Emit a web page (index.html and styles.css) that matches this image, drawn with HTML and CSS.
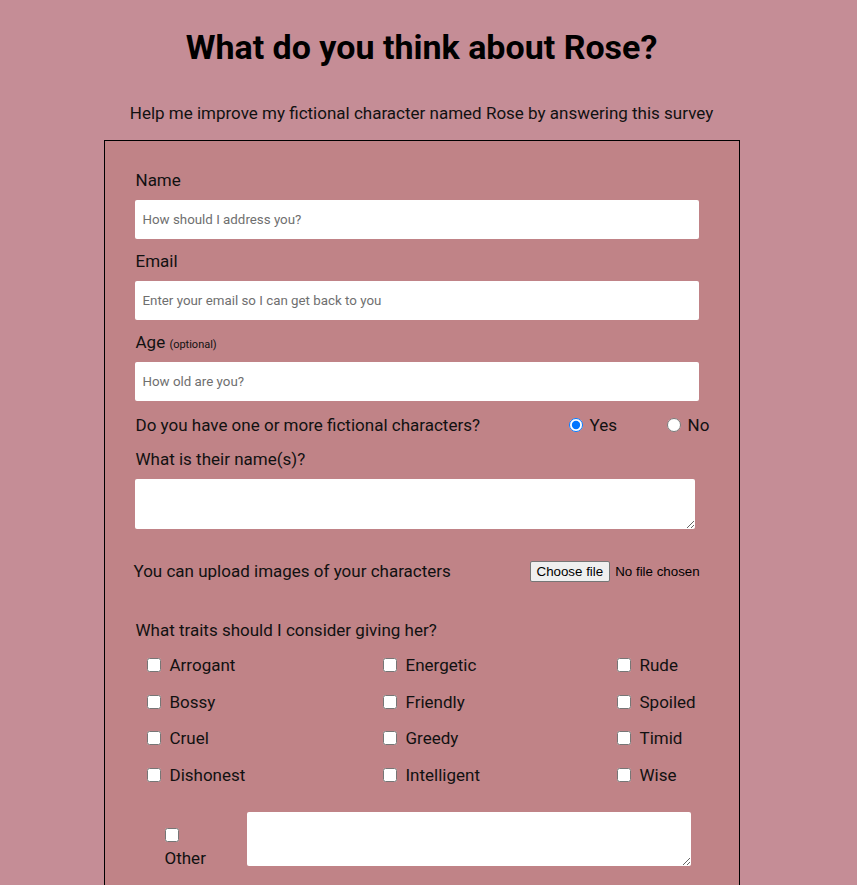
FILE: index.html
```html
<!DOCTYPE html>
<html lang="en">
<head>
<meta charset="utf-8">
<title>Survey</title>
<link rel="stylesheet" href="styles.css">
</head>
<body>
<div class="page">
  <h1 class="title">What do you think about Rose?</h1>
  <p class="intro">Help me improve my fictional character named Rose by answering this survey</p>
  <form class="survey">
    <div class="field">
      <label class="label" for="name">Name</label>
      <input class="text" id="name" type="text" placeholder="How should I address you?">
    </div>
    <div class="field">
      <label class="label" for="email">Email</label>
      <input class="text" id="email" type="email" placeholder="Enter your email so I can get back to you">
    </div>
    <div class="field">
      <label class="label" for="age">Age <span class="small">(optional)</span></label>
      <input class="text" id="age" type="number" placeholder="How old are you?">
    </div>
    <div class="radio-row">
      <span class="question">Do you have one or more fictional characters?</span>
      <label class="radio yes"><input type="radio" name="has" checked> Yes</label>
      <label class="radio no"><input type="radio" name="has"> No</label>
    </div>
    <div class="field names">
      <label class="label" for="names">What is their name(s)?</label>
      <textarea class="area" id="names"></textarea>
    </div>
    <div class="upload-row">
      <span class="upload-label">You can upload images of your characters</span>
      <label class="file-btn">Choose file<input class="file" type="file"></label>
      <span class="file-status">No file chosen</span>
    </div>
    <div class="traits-label">What traits should I consider giving her?</div>
    <div class="traits">
      <label class="trait"><input type="checkbox"> Arrogant</label>
      <label class="trait"><input type="checkbox"> Energetic</label>
      <label class="trait"><input type="checkbox"> Rude</label>
      <label class="trait"><input type="checkbox"> Bossy</label>
      <label class="trait"><input type="checkbox"> Friendly</label>
      <label class="trait"><input type="checkbox"> Spoiled</label>
      <label class="trait"><input type="checkbox"> Cruel</label>
      <label class="trait"><input type="checkbox"> Greedy</label>
      <label class="trait"><input type="checkbox"> Timid</label>
      <label class="trait"><input type="checkbox"> Dishonest</label>
      <label class="trait"><input type="checkbox"> Intelligent</label>
      <label class="trait"><input type="checkbox"> Wise</label>
    </div>
    <div class="other-row">
      <label class="other"><input type="checkbox"><span>Other</span></label>
      <textarea class="other-area"></textarea>
    </div>
  </form>
</div>
</body>
</html>
```

FILE: styles.css
```css
html, body {
  margin: 0;
  padding: 0;
}
body {
  background: #c58d96;
  font-family: Roboto, "Liberation Sans", sans-serif;
  color: #111;
}
.page {
  width: 843px;
  display: flex;
  flex-direction: column;
  align-items: center;
}
.title {
  margin: 27px 0 0;
  font-size: 34px;
  line-height: 40px;
  font-weight: 700;
  color: #000;
}
.intro {
  margin: 36px 0 0;
  font-size: 17px;
  line-height: 20px;
}
.survey {
  box-sizing: border-box;
  width: 636px;
  margin-top: 17px;
  border: 1px solid #000;
  background: #c08387;
  padding: 29px 40px 120px 30px;
  font-size: 17px;
}
.field {
  display: flex;
  flex-direction: column;
  margin-bottom: 12px;
}
.label {
  height: 20px;
  line-height: 20px;
  margin-left: 1px;
  margin-bottom: 10px;
}
.small {
  font-size: 11px;
  line-height: 1;
}
.text {
  box-sizing: border-box;
  height: 39px;
  width: 564px;
  border: none;
  border-radius: 2px;
  background: #fff;
  padding: 0 8px;
  font-family: Roboto, "Liberation Sans", sans-serif;
  font-size: 13.33px;
  outline: none;
}
.text::placeholder {
  color: #6f6f6f;
}
.radio-row {
  display: flex;
  align-items: center;
  height: 20px;
  margin-top: 14px;
  margin-left: 1px;
}
.question {
  width: 433px;
  flex-shrink: 0;
}
.radio {
  display: flex;
  align-items: center;
  flex-shrink: 0;
}
.radio input {
  margin: 0 7px 0 0;
  width: 14px;
  height: 14px;
}
.yes {
  width: 98px;
}
.names {
  margin-top: 14px;
}
.area {
  box-sizing: border-box;
  width: 560px;
  height: 50px;
  border: none;
  border-radius: 2px;
  background: #fff;
  resize: vertical;
  outline: none;
}
.upload-row {
  display: flex;
  align-items: center;
  height: 22px;
  margin-top: 31px;
  margin-left: -1px;
}
.upload-label {
  width: 396px;
  flex-shrink: 0;
}
.file-btn {
  box-sizing: border-box;
  flex-shrink: 0;
  white-space: nowrap;
  height: 21px;
  padding: 0 6px;
  display: flex;
  align-items: center;
  border: 1px solid #767676;
  border-radius: 2px;
  background: #efefef;
  color: #000;
  font-family: "Liberation Sans", Arial, sans-serif;
  font-size: 13.33px;
}
.file {
  display: none;
}
.file-status {
  flex-shrink: 0;
  white-space: nowrap;
  margin-left: 5px;
  font-family: "Liberation Sans", Arial, sans-serif;
  font-size: 13.33px;
  color: #000;
}
.traits-label {
  margin-top: 38px;
  margin-left: 1px;
  line-height: 20px;
}
.traits {
  display: grid;
  grid-template-columns: 236px 234px auto;
  row-gap: 16.7px;
  margin-top: 15px;
  margin-left: 12px;
}
.trait {
  display: flex;
  align-items: center;
  height: 20px;
  gap: 9px;
}
.trait input {
  margin: 0;
  width: 14px;
  height: 14px;
}
.other-row {
  display: flex;
  align-items: flex-start;
  margin-top: 27px;
  margin-left: 30px;
}
.other {
  display: flex;
  flex-direction: column;
  width: 82px;
  padding-top: 16px;
}
.other input {
  margin: 0 0 6px;
  width: 14px;
  height: 14px;
}
.other span {
  line-height: 20px;
}
.other-area {
  box-sizing: border-box;
  width: 444px;
  height: 54px;
  border: none;
  border-radius: 2px;
  background: #fff;
  outline: none;
}
```
